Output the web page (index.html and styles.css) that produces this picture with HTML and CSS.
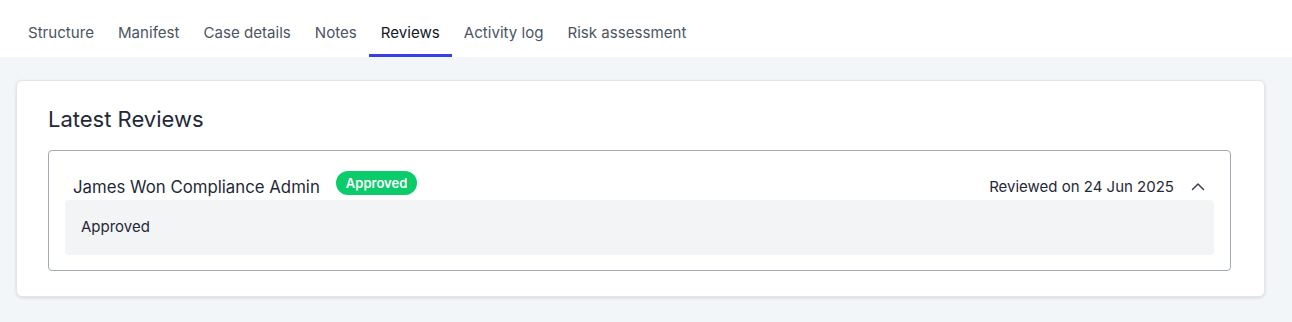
FILE: index.html
```html
<!DOCTYPE html>
<html lang="en">
<head>
    <meta charset="UTF-8">
    <meta name="viewport" content="width=device-width, initial-scale=1.0">
    <title>Reviews</title>
    <link rel="stylesheet" href="styles.css">
</head>
<body>
    <nav class="tabs">
        <a class="tab">Structure</a>
        <a class="tab">Manifest</a>
        <a class="tab">Case details</a>
        <a class="tab">Notes</a>
        <a class="tab active">Reviews</a>
        <a class="tab">Activity log</a>
        <a class="tab">Risk assessment</a>
    </nav>

    <main class="content">
        <section class="card">
            <h2 class="card-title">Latest Reviews</h2>

            <div class="review">
                <div class="review-head">
                    <div class="reviewer">
                        <span class="reviewer-name">James Won Compliance Admin</span>
                        <span class="badge">Approved</span>
                    </div>
                    <div class="review-meta">
                        <span>Reviewed on 24 Jun 2025</span>
                        <svg class="chevron" width="16" height="16" viewBox="0 0 16 16" fill="none" stroke="#374151" stroke-width="1.5" stroke-linecap="round" stroke-linejoin="round">
                            <path d="M2.5 10.5 L8 5 L13.5 10.5"/>
                        </svg>
                    </div>
                </div>
                <div class="review-body">Approved</div>
            </div>
        </section>
    </main>
</body>
</html>
```

FILE: styles.css
```css
* {
    margin: 0;
    padding: 0;
    box-sizing: border-box;
    font-family: 'Inter', 'Noto Sans', sans-serif;
}

body {
    background: #f3f6f9;
    color: #1f2937;
}

.tabs {
    display: flex;
    background: #ffffff;
    padding: 0 16px;
    height: 57px;
}

.tab {
    display: flex;
    align-items: center;
    padding: 10px 12px 0;
    font-size: 15.1px;
    color: #4b5563;
    border-bottom: 3px solid transparent;
    cursor: pointer;
}

.tab.active {
    color: #111827;
    border-bottom-color: #3a3ee6;
}

.content {
    padding: 23px 27px 24px 16px;
}

.card {
    background: #ffffff;
    border: 1px solid #e2e5ea;
    border-radius: 6px;
    box-shadow: 0 1px 3px rgba(0, 0, 0, 0.12);
    padding: 23px 33px 25px 31px;
}

.card-title {
    font-size: 22px;
    font-weight: 400;
    color: #1f2937;
    line-height: 30px;
    margin-bottom: 16px;
}

.review {
    border: 1px solid #a3aab4;
    border-radius: 4px;
    padding: 20px 16px 15px;
}

.review-head {
    display: flex;
    align-items: center;
    justify-content: space-between;
    padding: 0 8px;
    height: 29px;
}

.reviewer {
    display: flex;
    align-items: center;
    gap: 16px;
}

.reviewer-name {
    font-size: 16.8px;
    color: #1f2937;
    margin-top: 2px;
}

.badge {
    background: #0ccb6a;
    color: #ffffff;
    font-size: 13px;
    font-weight: 600;
    padding: 4px 10px;
    border-radius: 12px;
    margin-bottom: 5px;
}

.review-meta {
    display: flex;
    align-items: center;
    gap: 16px;
    font-size: 15px;
    color: #1f2937;
    margin-top: 2px;
}

.review-body {
    background: #f3f4f6;
    border-radius: 4px;
    padding: 17px 16px 18px;
    font-size: 15px;
    line-height: 20px;
    color: #1f2937;
}
```
